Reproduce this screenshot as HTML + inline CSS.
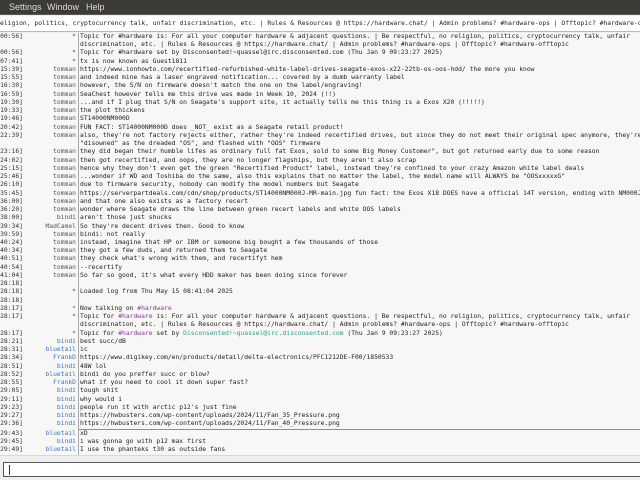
<!DOCTYPE html>
<html><head><meta charset="utf-8"><style>
*{margin:0;padding:0;box-sizing:border-box}
body{width:640px;height:480px;overflow:hidden;background:#efefed;font-family:"DejaVu Sans Mono","Liberation Mono",monospace;position:relative}
#menu{position:absolute;left:0;top:0;width:640px;height:15px;background:#3c3b37;border-bottom:1px solid #5a5955;color:#dfdbd2;font-family:"Liberation Sans",sans-serif;font-size:9px;line-height:15px}
#menu span{position:absolute;top:0}
#topic{position:absolute;left:0;top:16px;width:640px;height:16px;background:#fff;border-bottom:1px solid #b8b8b4;font-size:6.35px;line-height:16px;white-space:nowrap;overflow:hidden;color:#222}
#chat{position:absolute;left:0;top:33px;width:640px;height:423px;background:#f7f7f5;overflow:hidden;border-bottom:1px solid #d8d8d4}
#sep{position:absolute;left:78px;top:0;width:1px;height:423px;background:#a8a8a8}
.r{position:absolute;left:0;height:8.24px;width:640px;font-size:6.35px;line-height:8.24px;white-space:nowrap;color:#222}
.t{position:absolute;right:617px;top:0;color:#333}
.n{position:absolute;right:564px;top:0;color:#555}
.x{position:absolute;left:80px;top:0}
.b{color:#3f74c0}
.g{color:#4aa04a}
.p{color:#8a3a9a}
.c{color:#2a9d8a}
#mark{position:absolute;left:79px;top:396px;width:561px;height:1px;background:#c0805a}
#input{position:absolute;left:3px;top:462px;width:637px;height:15px;background:#fff;border:1px solid #555;border-right:none}
#caret{position:absolute;left:5px;top:2px;width:1px;height:10px;background:#333}
</style></head><body>
<div id="menu"><span style="left:-3px;">r</span><span style="left:9px">Settings</span><span style="left:47px">Window</span><span style="left:86px">Help</span></div>
<div id="topic">eligion, politics, cryptocurrency talk, unfair discrimination, etc. | Rules &amp; Resources @ https://hardware.chat/ | Admin problems? #hardware-ops | Offtopic? #hardware-offtopic</div>
<div id="chat">
<div id="sep"></div>
<div class="r" style="top:0px"><span class="t">[00:56]</span><span class="n">*</span><span class="x">Topic for #hardware is: For all your computer hardware &amp; adjacent questions. | Be respectful, no religion, politics, cryptocurrency talk, unfair</span></div>
<div class="r" style="top:8.24px"><span class="x">discrimination, etc. | Rules &amp; Resources @ https://hardware.chat/ | Admin problems? #hardware-ops | Offtopic? #hardware-offtopic</span></div>
<div class="r" style="top:16.48px"><span class="t">[00:56]</span><span class="n">*</span><span class="x">Topic for #hardware set by Disconsented!~quassel@irc.disconsented.com (Thu Jan  9 09:23:27 2025)</span></div>
<div class="r" style="top:24.72px"><span class="t">[07:41]</span><span class="n">*</span><span class="x">tx is now known as Guest1811</span></div>
<div class="r" style="top:32.96px"><span class="t">[15:39]</span><span class="n">tomman</span><span class="x">https://www.ionhowto.com/recertified-refurbished-white-label-drives-seagate-exos-x22-22tb-os-oos-hdd/ the more you know</span></div>
<div class="r" style="top:41.2px"><span class="t">[15:55]</span><span class="n">tomman</span><span class="x">and indeed mine has a laser engraved notification... covered by a dumb warranty label</span></div>
<div class="r" style="top:49.44px"><span class="t">[16:30]</span><span class="n">tomman</span><span class="x">however, the S/N on firmware doesn't match the one on the label/engraving!</span></div>
<div class="r" style="top:57.68px"><span class="t">[16:59]</span><span class="n">tomman</span><span class="x">SeaChest however tells me this drive was made in Week 10, 2024 (!!)</span></div>
<div class="r" style="top:65.92px"><span class="t">[19:30]</span><span class="n">tomman</span><span class="x">...and if I plug that S/N on Seagate's support site, it actually tells me this thing is a Exos X20 (!!!!!)</span></div>
<div class="r" style="top:74.16px"><span class="t">[19:33]</span><span class="n">tomman</span><span class="x">the plot thickens</span></div>
<div class="r" style="top:82.4px"><span class="t">[19:46]</span><span class="n">tomman</span><span class="x">ST14000NM000D</span></div>
<div class="r" style="top:90.64px"><span class="t">[20:42]</span><span class="n">tomman</span><span class="x">FUN FACT: ST14000NM000D does _NOT_ exist as a Seagate retail product!</span></div>
<div class="r" style="top:98.88px"><span class="t">[22:39]</span><span class="n">tomman</span><span class="x">also, they're not factory rejects either, rather they're indeed recertified drives, but since they do not meet their original spec anymore, they're</span></div>
<div class="r" style="top:107.12px"><span class="x">"disowned" as the dreaded "OS", and flashed with "OOS" firmware</span></div>
<div class="r" style="top:115.36px"><span class="t">[23:16]</span><span class="n">tomman</span><span class="x">they did began their humble lifes as ordinary full fat Exos, sold to some Big Money Customer", but got returned early due to some reason</span></div>
<div class="r" style="top:123.6px"><span class="t">[24:02]</span><span class="n">tomman</span><span class="x">then got recertified, and oops, they are no longer flagships, but they aren't also scrap</span></div>
<div class="r" style="top:131.84px"><span class="t">[25:15]</span><span class="n">tomman</span><span class="x">hence why they don't even get the green "Recertified Product" label, instead they're confined to your crazy Amazon white label deals</span></div>
<div class="r" style="top:140.08px"><span class="t">[25:46]</span><span class="n">tomman</span><span class="x">...wonder if WD and Toshiba do the same, also this explains that no matter the label, the model name will ALWAYS be "OOSxxxxxG"</span></div>
<div class="r" style="top:148.32px"><span class="t">[26:10]</span><span class="n">tomman</span><span class="x">due to firmware security, nobody can modify the model numbers but Seagate</span></div>
<div class="r" style="top:156.56px"><span class="t">[35:45]</span><span class="n">tomman</span><span class="x">https://serverpartdeals.com/cdn/shop/products/ST14000NM000J-MR-main.jpg fun fact: the Exos X18 DOES have a official 14T version, ending with NM000J</span></div>
<div class="r" style="top:164.8px"><span class="t">[36:00]</span><span class="n">tomman</span><span class="x">and that one also exists as a factory recert</span></div>
<div class="r" style="top:173.04px"><span class="t">[36:20]</span><span class="n">tomman</span><span class="x">wonder where Seagate draws the line between green recert labels and white OOS labels</span></div>
<div class="r" style="top:181.28px"><span class="t">[38:00]</span><span class="n">bindi</span><span class="x">aren't those just shucks</span></div>
<div class="r" style="top:189.52px"><span class="t">[39:34]</span><span class="n">MadCamel</span><span class="x">So they're decent drives then. Good to know</span></div>
<div class="r" style="top:197.76px"><span class="t">[39:59]</span><span class="n">tomman</span><span class="x">bindi: not really</span></div>
<div class="r" style="top:206px"><span class="t">[40:24]</span><span class="n">tomman</span><span class="x">instead, imagine that HP or IBM or someone big bought a few thousands of those</span></div>
<div class="r" style="top:214.24px"><span class="t">[40:34]</span><span class="n">tomman</span><span class="x">they got a few duds, and returned them to Seagate</span></div>
<div class="r" style="top:222.48px"><span class="t">[40:51]</span><span class="n">tomman</span><span class="x">they check what's wrong with them, and recertifyt hem</span></div>
<div class="r" style="top:230.72px"><span class="t">[40:54]</span><span class="n">tomman</span><span class="x">--recertify</span></div>
<div class="r" style="top:238.96px"><span class="t">[41:04]</span><span class="n">tomman</span><span class="x">So far so good, it's what every HDD maker has been doing since forever</span></div>
<div class="r" style="top:247.2px"><span class="t">[28:18]</span></div>
<div class="r" style="top:255.44px"><span class="t">[28:18]</span><span class="n">*</span><span class="x">Loaded log from Thu May 15 08:41:04 2025</span></div>
<div class="r" style="top:263.68px"><span class="t">[28:18]</span></div>
<div class="r" style="top:271.92px"><span class="t">[28:17]</span><span class="n g">*</span><span class="x">Now talking on <span class="p">#hardware</span></span></div>
<div class="r" style="top:280.16px"><span class="t">[28:17]</span><span class="n p">*</span><span class="x">Topic for <span class="p">#hardware</span> is: For all your computer hardware &amp; adjacent questions. | Be respectful, no religion, politics, cryptocurrency talk, unfair</span></div>
<div class="r" style="top:288.4px"><span class="x">discrimination, etc. | Rules &amp; Resources @ https://hardware.chat/ | Admin problems? #hardware-ops | Offtopic? #hardware-offtopic</span></div>
<div class="r" style="top:296.64px"><span class="t">[28:17]</span><span class="n p">*</span><span class="x">Topic for <span class="p">#hardware</span> set by <span class="c">Disconsented!~quassel@irc.disconsented.com</span> (Thu Jan  9 09:23:27 2025)</span></div>
<div class="r" style="top:304.88px"><span class="t">[28:21]</span><span class="n b">bindi</span><span class="x">best succ/dB</span></div>
<div class="r" style="top:313.12px"><span class="t">[28:31]</span><span class="n b">bluetail</span><span class="x">ic</span></div>
<div class="r" style="top:321.36px"><span class="t">[28:34]</span><span class="n b">FrankD</span><span class="x">https://www.digikey.com/en/products/detail/delta-electronics/PFC1212DE-F00/1850533</span></div>
<div class="r" style="top:329.6px"><span class="t">[28:51]</span><span class="n b">bindi</span><span class="x">48W lol</span></div>
<div class="r" style="top:337.84px"><span class="t">[28:52]</span><span class="n b">bluetail</span><span class="x">bindi do you preffer succ or blow?</span></div>
<div class="r" style="top:346.08px"><span class="t">[28:55]</span><span class="n b">FrankD</span><span class="x">what if you need to cool it down super fast?</span></div>
<div class="r" style="top:354.32px"><span class="t">[29:05]</span><span class="n b">bindi</span><span class="x">tough shit</span></div>
<div class="r" style="top:362.56px"><span class="t">[29:11]</span><span class="n b">bindi</span><span class="x">why would i</span></div>
<div class="r" style="top:370.8px"><span class="t">[29:23]</span><span class="n b">bindi</span><span class="x">people run it with arctic p12's just fine</span></div>
<div class="r" style="top:379.04px"><span class="t">[29:27]</span><span class="n b">bindi</span><span class="x">https://hwbusters.com/wp-content/uploads/2024/11/Fan_35_Pressure.png</span></div>
<div class="r" style="top:387.28px"><span class="t">[29:36]</span><span class="n b">bindi</span><span class="x">https://hwbusters.com/wp-content/uploads/2024/11/Fan_40_Pressure.png</span></div>
<div class="r" style="top:396.52px"><span class="t">[29:43]</span><span class="n b">bluetail</span><span class="x">xD</span></div>
<div class="r" style="top:404.76px"><span class="t">[29:45]</span><span class="n b">bindi</span><span class="x">i was gonna go with p12 max first</span></div>
<div class="r" style="top:413px"><span class="t">[29:49]</span><span class="n b">bluetail</span><span class="x">I use the phanteks t30 as outside fans</span></div>
<div id="mark"></div>
</div>
<div id="input"><div id="caret"></div></div>
</body></html>
